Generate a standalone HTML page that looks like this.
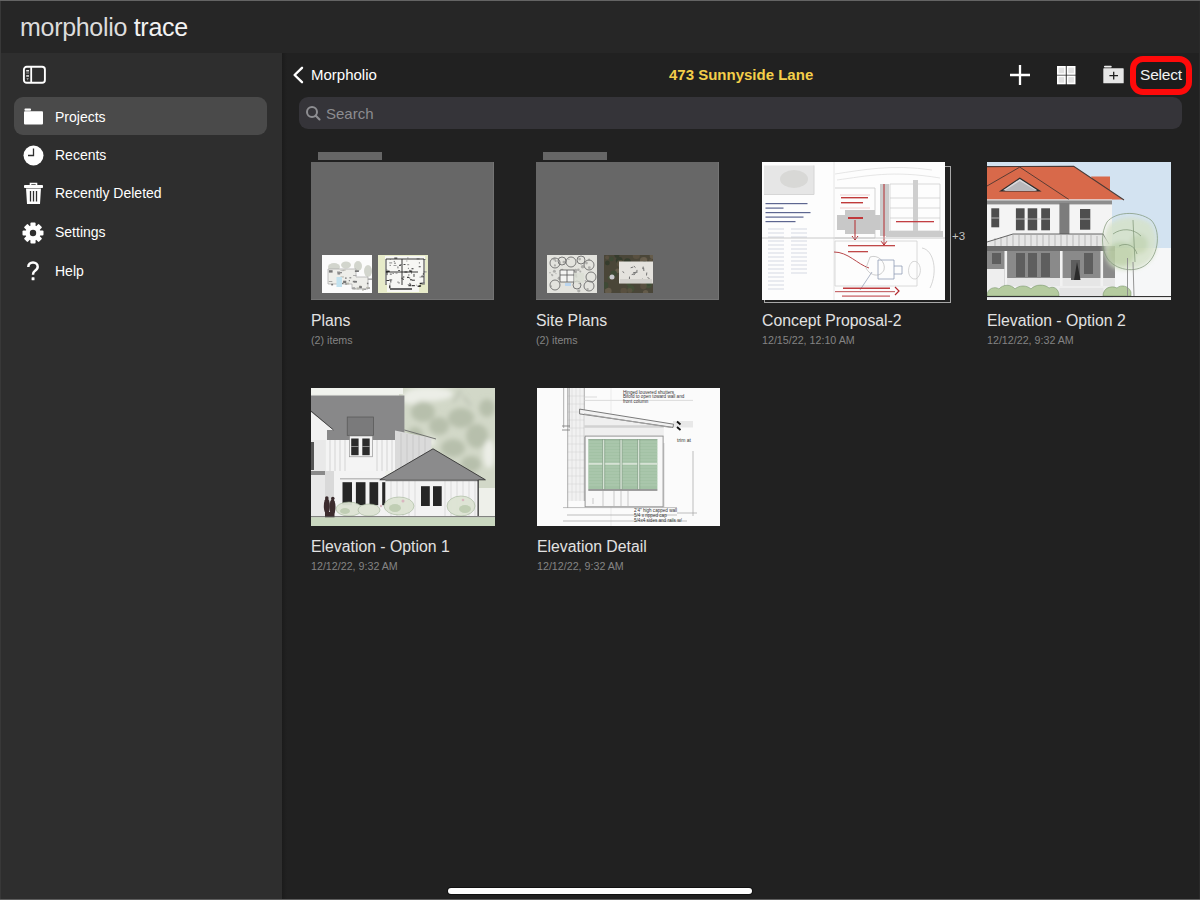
<!DOCTYPE html>
<html><head><meta charset="utf-8">
<style>
*{margin:0;padding:0;box-sizing:border-box}
html,body{width:1200px;height:900px;overflow:hidden;background:#212121;font-family:"Liberation Sans",sans-serif;color:#fff}
.abs{position:absolute}
#top{left:0;top:0;width:1200px;height:53px;background:#262626;border-top:1px solid #646464}
#brand{left:20px;top:12.5px;font-size:25px;color:#f2f2f2;white-space:nowrap;letter-spacing:-0.3px}#brand span{color:#dcdcdc}
#side{left:0;top:53px;width:282px;height:847px;background:#2e2e2e}
#main{left:282px;top:53px;width:918px;height:847px;background:linear-gradient(to right,#1b1b1b,#212121 5px)}
.sel{left:14px;top:97px;width:253px;height:38px;background:#4a4a4a;border-radius:9px}
.si{left:55px;font-size:14px;color:#fff;white-space:nowrap}
.t{white-space:nowrap}
#search{left:299px;top:97px;width:883px;height:32px;background:#353439;border-radius:9px}
.folder{background:#676767;box-shadow:inset -1px -1px 0 #747474}
.ftab{background:#666}
.name{font-size:15.8px;color:#e2e2e2;white-space:nowrap}
.sub{font-size:10.7px;color:#848484;white-space:nowrap}
#home{left:448px;top:887.5px;width:304px;height:6px;border-radius:3px;background:#fff;box-shadow:0 0 0 1px #111}
</style></head><body>
<div id="top" class="abs"></div>
<div id="brand" class="abs"><span>morpholio</span> trace</div>
<div id="side" class="abs"></div>
<div id="main" class="abs"></div>

<!-- sidebar toggle icon -->
<svg class="abs" style="left:22px;top:65px" width="26" height="20" viewBox="0 0 26 20">
  <rect x="1.9" y="1.8" width="21" height="16" rx="2.8" fill="none" stroke="#fff" stroke-width="1.9"/>
  <line x1="9.2" y1="2" x2="9.2" y2="18" stroke="#fff" stroke-width="1.8"/>
  <rect x="4.2" y="5" width="2.8" height="1.5" fill="#e6e6e6"/>
  <rect x="4.2" y="7.6" width="2.8" height="0.8" fill="#bbb"/>
  <rect x="4.2" y="10.2" width="2.8" height="1.5" fill="#e6e6e6"/>
  <path d="M4.4 13 H6.8 L5.6 15.5 Z" fill="#999"/>
</svg>

<div class="abs sel"></div>
<!-- folder icon -->
<svg class="abs" style="left:23px;top:107px" width="21" height="19" viewBox="0 0 21 19">
  <rect x="1.5" y="1.5" width="6.5" height="2.2" rx="0.8" fill="#fff"/>
  <rect x="1" y="4.3" width="19" height="13.2" rx="1" fill="#fff"/>
</svg>
<div class="abs si" style="top:109px">Projects</div>

<!-- clock -->
<svg class="abs" style="left:23px;top:145px" width="21" height="21" viewBox="0 0 21 21">
  <circle cx="10.5" cy="10.5" r="10" fill="#fff"/>
  <path d="M10.5 3.5 V10.5 H5" fill="none" stroke="#2e2e2e" stroke-width="1.3"/>
</svg>
<div class="abs si" style="top:147px">Recents</div>

<!-- trash -->
<svg class="abs" style="left:23px;top:182px" width="21" height="23" viewBox="0 0 21 23">
  <path d="M7.5 3 V1.5 H13.5 V3" fill="none" stroke="#fff" stroke-width="1.6"/>
  <rect x="1" y="3" width="19" height="3" rx="0.8" fill="#fff"/>
  <path d="M3 6.5 H18 L17 22 H4 Z" fill="#fff"/>
  <path d="M7.5 9 V19.5 M10.5 9 V19.5 M13.5 9 V19.5" stroke="#2e2e2e" stroke-width="1.3"/>
</svg>
<div class="abs si" style="top:185px">Recently Deleted</div>

<!-- gear -->
<svg class="abs" style="left:22px;top:222px" width="22" height="22" viewBox="0 0 22 22">
  <g fill="#fff" transform="translate(11 11)">
    <circle r="7.5"/>
    <rect x="-2.6" y="-10.5" width="5.2" height="21" rx="1"/>
    <rect x="-2.6" y="-10.5" width="5.2" height="21" rx="1" transform="rotate(45)"/>
    <rect x="-2.6" y="-10.5" width="5.2" height="21" rx="1" transform="rotate(90)"/>
    <rect x="-2.6" y="-10.5" width="5.2" height="21" rx="1" transform="rotate(135)"/>
  </g>
  <circle cx="11" cy="11" r="3.2" fill="#2e2e2e"/>
</svg>
<div class="abs si" style="top:224px">Settings</div>

<!-- help -->
<svg class="abs" style="left:26px;top:261px" width="14" height="20" viewBox="0 0 14 20"><path d="M2.3 6 C2.3 3.2 4.3 1.5 7 1.5 C9.7 1.5 11.7 3.3 11.7 5.8 C11.7 8 10.3 9 8.8 10 C7.5 10.9 7 11.6 7 13.8" fill="none" stroke="#fff" stroke-width="2.5"/><rect x="5.6" y="16.2" width="2.9" height="3" rx="0.5" fill="#fff"/></svg>
<div class="abs si" style="top:262.5px">Help</div>

<!-- main header -->
<svg class="abs" style="left:291px;top:64px" width="14" height="21" viewBox="0 0 14 21">
  <path d="M11 3.8 L3.6 11 L11 18.2" fill="none" stroke="#fff" stroke-width="2.4" stroke-linecap="round" stroke-linejoin="round"/>
</svg>
<div class="abs t" style="left:311px;top:65.5px;font-size:15px;color:#fff">Morpholio</div>
<div class="abs t" style="left:669px;top:66px;font-size:15px;font-weight:bold;color:#f4cf4a">473 Sunnyside Lane</div>

<svg class="abs" style="left:1009px;top:64px" width="22" height="22" viewBox="0 0 22 22">
  <path d="M11 1 V21 M1 11 H21" stroke="#fff" stroke-width="2.3"/>
</svg>
<svg class="abs" style="left:1056px;top:65px" width="21" height="21" viewBox="0 0 21 21">
  <g fill="#e2e2e2" stroke="#fff" stroke-width="1.6">
  <rect x="1.8" y="1.8" width="7.2" height="7.2"/>
  <rect x="11.5" y="1.8" width="7.2" height="7.2"/>
  <rect x="1.8" y="11.3" width="7.2" height="7.2"/>
  <rect x="11.5" y="11.3" width="7.2" height="7.2"/>
  </g>
</svg>
<svg class="abs" style="left:1102px;top:64px" width="24" height="21" viewBox="0 0 24 21">
  <rect x="2" y="1.7" width="7.7" height="1.8" rx="0.8" fill="#eee"/>
  <rect x="1.3" y="4.3" width="20.4" height="15" rx="0.6" fill="#e6e6e6"/>
  <path d="M11.7 7.8 V15.6 M7.4 11.7 H16" stroke="#1e1e1e" stroke-width="1.3"/>
</svg>
<div class="abs" style="left:1130px;top:56px;width:62px;height:39px;border:6.3px solid #ff0a0a;border-radius:13px;background:#1c1c1c"></div>
<div class="abs t" style="left:1140px;top:65.5px;font-size:15.5px;color:#f2f2f2;letter-spacing:-0.2px">Select</div>

<div id="search" class="abs"></div>
<svg class="abs" style="left:305px;top:105px" width="17" height="17" viewBox="0 0 17 17">
  <circle cx="7" cy="7" r="5" fill="none" stroke="#8e8e92" stroke-width="2"/>
  <path d="M10.6 10.6 L14.5 14.5" stroke="#8e8e92" stroke-width="2.1" stroke-linecap="round"/>
</svg>
<div class="abs t" style="left:326px;top:104.7px;font-size:15px;color:#8c8c90">Search</div>

<!-- items row 1 -->
<div class="abs ftab" style="left:318px;top:152px;width:64px;height:8px"></div>
<div class="abs folder" style="left:311px;top:162px;width:183px;height:138px"></div>
<svg class="abs" style="left:322px;top:255px" width="50" height="38" viewBox="0 0 50 38">
<rect width="50" height="38" fill="#fbfbfb"/>
<g fill="#c9ccc2" opacity="0.8"><ellipse cx="12" cy="12" rx="6" ry="4"/><ellipse cx="24" cy="10" rx="5" ry="3.5"/><ellipse cx="36" cy="11" rx="4" ry="5"/><ellipse cx="46" cy="16" rx="4" ry="6"/></g>
<path d="M6 14 H34 V22 H46 V34 H30 V29 H6 Z" fill="#eeeeea" stroke="#a8a8a8" stroke-width="0.7"/>
<rect x="15.5" y="24.9" width="2.5" height="1.7" fill="#8a8a8a"/><rect x="30.2" y="32.2" width="2.9" height="1.6" fill="#a5a5a5"/><rect x="45.8" y="23.4" width="4.3" height="1.5" fill="#a5a5a5"/><rect x="15.3" y="17.0" width="4.7" height="1.3" fill="#8a8a8a"/><rect x="32.9" y="15.3" width="4.0" height="1.7" fill="#777"/><rect x="37.2" y="30.5" width="2.1" height="1.7" fill="#b9b9b0"/><rect x="34.6" y="32.4" width="2.6" height="2.1" fill="#b9b9b0"/><rect x="20.6" y="14.7" width="3.0" height="1.0" fill="#b9b9b0"/><rect x="37.2" y="31.1" width="2.7" height="2.2" fill="#777"/><rect x="27.4" y="22.2" width="1.9" height="1.2" fill="#8a8a8a"/><rect x="40.3" y="33.8" width="3.7" height="0.8" fill="#777"/><rect x="44.6" y="32.1" width="3.3" height="1.9" fill="#a5a5a5"/><rect x="31.3" y="33.8" width="2.1" height="0.7" fill="#b9b9b0"/><rect x="40.2" y="33.8" width="1.4" height="2.1" fill="#b9b9b0"/><rect x="23.1" y="22.3" width="1.5" height="1.7" fill="#8a8a8a"/><rect x="21.1" y="25.7" width="3.2" height="2.3" fill="#777"/><rect x="18.4" y="15.5" width="3.4" height="0.6" fill="#a5a5a5"/><rect x="16.5" y="27.8" width="4.9" height="1.2" fill="#777"/><rect x="44.3" y="31.9" width="2.5" height="1.4" fill="#b9b9b0"/><rect x="31.8" y="25.9" width="3.2" height="1.7" fill="#777"/><rect x="23.2" y="28.4" width="2.0" height="1.1" fill="#777"/><rect x="26.8" y="25.0" width="1.0" height="1.3" fill="#777"/><rect x="6.8" y="26.3" width="3.5" height="0.6" fill="#777"/><rect x="24.7" y="27.6" width="2.4" height="1.9" fill="#b9b9b0"/><rect x="6.9" y="15.2" width="3.7" height="2.4" fill="#777"/><rect x="31.1" y="20.0" width="3.4" height="0.9" fill="#a5a5a5"/><rect x="18.5" y="21.4" width="3.4" height="1.1" fill="#b9b9b0"/><rect x="44.9" y="27.7" width="1.5" height="1.5" fill="#777"/><rect x="15.5" y="17.7" width="2.7" height="1.9" fill="#8a8a8a"/><rect x="30.0" y="33.0" width="3.7" height="0.9" fill="#a5a5a5"/><rect x="9.2" y="28.8" width="1.9" height="1.6" fill="#777"/><rect x="15.0" y="16.4" width="3.1" height="0.9" fill="#a5a5a5"/><rect x="30.8" y="25.8" width="2.7" height="1.5" fill="#777"/>
<rect x="14.5" y="22" width="5.5" height="10" fill="#c2e2ef"/>
</svg>
<svg class="abs" style="left:378px;top:255px" width="50" height="38" viewBox="0 0 50 38">
<rect width="50" height="38" fill="#e7ebc9"/>
<path d="M7 1 H47 V29 H41 V37 H9 V29 H7 Z" fill="#f7f7f4"/>
<rect x="25.1" y="21.0" width="1.2" height="2.0" fill="#888"/><rect x="8.4" y="14.4" width="1.0" height="0.8" fill="#888"/><rect x="43.8" y="28.4" width="3.0" height="1.0" fill="#333"/><rect x="8.3" y="15.7" width="3.0" height="1.2" fill="#555"/><rect x="41.7" y="27.8" width="3.0" height="1.2" fill="#1a1a1a"/><rect x="38.6" y="3.4" width="3.0" height="1.0" fill="#888"/><rect x="29.5" y="2.4" width="0.8" height="1.0" fill="#555"/><rect x="16.3" y="2.6" width="3.0" height="1.0" fill="#1a1a1a"/><rect x="43.6" y="20.4" width="1.2" height="1.0" fill="#555"/><rect x="44.9" y="18.2" width="0.8" height="1.2" fill="#333"/><rect x="14.7" y="18.0" width="0.8" height="1.0" fill="#333"/><rect x="37.9" y="29.7" width="1.0" height="0.8" fill="#888"/><rect x="31.5" y="27.9" width="0.8" height="1.2" fill="#333"/><rect x="17.5" y="17.8" width="2.0" height="0.8" fill="#888"/><rect x="19.6" y="26.6" width="0.8" height="1.0" fill="#1a1a1a"/><rect x="11.9" y="4.1" width="0.8" height="0.8" fill="#888"/><rect x="19.3" y="11.4" width="1.2" height="2.0" fill="#888"/><rect x="29.9" y="12.8" width="1.0" height="1.2" fill="#888"/><rect x="11.8" y="18.7" width="2.0" height="0.8" fill="#333"/><rect x="8.7" y="15.8" width="3.0" height="1.0" fill="#1a1a1a"/><rect x="31.3" y="14.9" width="1.2" height="2.0" fill="#555"/><rect x="23.4" y="22.8" width="2.0" height="0.8" fill="#333"/><rect x="15.5" y="10.1" width="3.0" height="0.8" fill="#888"/><rect x="15.8" y="5.9" width="0.8" height="1.2" fill="#555"/><rect x="44.8" y="18.8" width="1.2" height="0.8" fill="#888"/><rect x="33.9" y="30.2" width="3.0" height="1.0" fill="#1a1a1a"/><rect x="35.6" y="18.9" width="0.8" height="3.0" fill="#1a1a1a"/><rect x="25.5" y="9.1" width="2.0" height="0.8" fill="#1a1a1a"/><rect x="29.0" y="21.8" width="2.0" height="1.0" fill="#1a1a1a"/><rect x="20.3" y="27.6" width="0.8" height="0.8" fill="#888"/><rect x="39.6" y="30.6" width="3.0" height="1.2" fill="#1a1a1a"/><rect x="8.4" y="25.0" width="3.0" height="1.0" fill="#333"/><rect x="11.2" y="24.5" width="3.0" height="0.8" fill="#555"/><rect x="40.9" y="7.4" width="0.8" height="1.0" fill="#333"/><rect x="32.2" y="15.6" width="2.0" height="1.2" fill="#555"/><rect x="30.4" y="30.2" width="3.0" height="1.0" fill="#1a1a1a"/><rect x="21.6" y="9.1" width="2.0" height="1.0" fill="#888"/><rect x="33.9" y="24.7" width="3.0" height="1.0" fill="#333"/><rect x="32.1" y="28.9" width="1.0" height="1.0" fill="#1a1a1a"/><rect x="26.4" y="16.5" width="3.0" height="1.0" fill="#333"/><rect x="12.3" y="24.6" width="1.0" height="3.0" fill="#555"/><rect x="43.5" y="27.5" width="3.0" height="1.2" fill="#888"/><rect x="30.2" y="19.5" width="1.2" height="1.0" fill="#555"/><rect x="7.9" y="16.4" width="2.0" height="1.0" fill="#333"/><rect x="29.2" y="9.2" width="2.0" height="1.0" fill="#888"/><rect x="45.7" y="16.4" width="3.0" height="1.0" fill="#888"/><rect x="29.6" y="29.1" width="3.0" height="0.8" fill="#888"/><rect x="45.7" y="4.2" width="2.0" height="0.8" fill="#888"/><rect x="42.5" y="28.7" width="0.8" height="1.0" fill="#555"/><rect x="16.4" y="7.7" width="1.2" height="1.0" fill="#333"/><rect x="31.3" y="22.3" width="0.8" height="1.2" fill="#333"/><rect x="40.7" y="11.4" width="2.0" height="0.8" fill="#1a1a1a"/><rect x="11.6" y="9.9" width="1.2" height="0.8" fill="#555"/><rect x="24.6" y="24.0" width="1.2" height="0.8" fill="#1a1a1a"/><rect x="20.1" y="15.1" width="2.0" height="0.8" fill="#333"/><rect x="32.1" y="24.3" width="2.0" height="1.0" fill="#333"/><rect x="28.2" y="5.6" width="1.2" height="0.8" fill="#888"/><rect x="11.4" y="28.6" width="1.2" height="0.8" fill="#555"/><rect x="33.5" y="13.1" width="2.0" height="1.2" fill="#555"/><rect x="11.2" y="30.3" width="1.2" height="3.0" fill="#1a1a1a"/><rect x="33.0" y="17.3" width="0.8" height="1.2" fill="#333"/><rect x="32.2" y="23.9" width="1.0" height="1.0" fill="#555"/><rect x="41.7" y="21.7" width="0.8" height="0.8" fill="#333"/><rect x="42.9" y="21.3" width="3.0" height="1.0" fill="#555"/><rect x="32.3" y="15.7" width="1.2" height="1.0" fill="#1a1a1a"/><rect x="11.2" y="7.4" width="3.0" height="1.0" fill="#888"/><rect x="21.0" y="10.0" width="2.0" height="0.8" fill="#333"/><rect x="8.6" y="17.1" width="1.0" height="3.0" fill="#555"/><rect x="41.1" y="30.4" width="2.0" height="1.0" fill="#1a1a1a"/><rect x="20.8" y="27.4" width="0.8" height="1.0" fill="#555"/>
<path d="M8 4 H46 V28 M8 4 V30 M8 17 H40 M24 4 V30" fill="none" stroke="#222" stroke-width="0.9"/>
<path d="M12 34 H34" stroke="#666" stroke-width="2"/>
</svg>
<div class="abs name" style="left:311px;top:312px">Plans</div>
<div class="abs sub" style="left:311px;top:334px">(2) items</div>

<div class="abs ftab" style="left:543px;top:152px;width:64px;height:8px"></div>
<div class="abs folder" style="left:536px;top:162px;width:183px;height:138px"></div>
<svg class="abs" style="left:547px;top:255px" width="50" height="38" viewBox="0 0 50 38">
<rect width="50" height="38" fill="#e3e3de"/>
<circle cx="8" cy="8" r="5" fill="none" stroke="#6d6d6d" stroke-width="0.9"/><circle cx="15" cy="6" r="4" fill="none" stroke="#6d6d6d" stroke-width="0.9"/><circle cx="24" cy="7" r="5" fill="none" stroke="#6d6d6d" stroke-width="0.9"/><circle cx="34" cy="5" r="4" fill="none" stroke="#6d6d6d" stroke-width="0.9"/><circle cx="42" cy="10" r="5" fill="none" stroke="#6d6d6d" stroke-width="0.9"/><circle cx="44" cy="22" r="5" fill="none" stroke="#6d6d6d" stroke-width="0.9"/><circle cx="42" cy="31" r="5" fill="none" stroke="#6d6d6d" stroke-width="0.9"/><circle cx="8" cy="30" r="5" fill="none" stroke="#6d6d6d" stroke-width="0.9"/><circle cx="30" cy="30" r="4" fill="none" stroke="#6d6d6d" stroke-width="0.9"/><circle cx="16.9" cy="7.1" r="1.4" fill="#8a8a88" opacity="0.6"/><circle cx="5.3" cy="20.2" r="1.0" fill="#8a8a88" opacity="0.6"/><circle cx="4.7" cy="19.3" r="0.6" fill="#8a8a88" opacity="0.6"/><circle cx="21.9" cy="4.4" r="0.7" fill="#8a8a88" opacity="0.6"/><circle cx="21.5" cy="30.1" r="0.7" fill="#8a8a88" opacity="0.6"/><circle cx="12.3" cy="23.3" r="1.7" fill="#8a8a88" opacity="0.6"/><circle cx="28.5" cy="15.5" r="1.8" fill="#8a8a88" opacity="0.6"/><circle cx="4.1" cy="31.2" r="0.9" fill="#8a8a88" opacity="0.6"/><circle cx="8.6" cy="6.0" r="1.0" fill="#8a8a88" opacity="0.6"/><circle cx="39.5" cy="8.1" r="1.3" fill="#8a8a88" opacity="0.6"/><circle cx="31.4" cy="14.7" r="1.3" fill="#8a8a88" opacity="0.6"/><circle cx="4.9" cy="4.0" r="0.8" fill="#8a8a88" opacity="0.6"/><circle cx="33.3" cy="16.5" r="1.0" fill="#8a8a88" opacity="0.6"/><circle cx="28.9" cy="17.4" r="1.0" fill="#8a8a88" opacity="0.6"/><circle cx="38.5" cy="25.8" r="0.9" fill="#8a8a88" opacity="0.6"/><circle cx="28.4" cy="19.9" r="1.7" fill="#8a8a88" opacity="0.6"/><circle cx="35.6" cy="11.8" r="1.8" fill="#8a8a88" opacity="0.6"/><circle cx="7.4" cy="16.2" r="1.5" fill="#8a8a88" opacity="0.6"/><circle cx="9.0" cy="18.6" r="0.6" fill="#8a8a88" opacity="0.6"/><circle cx="32.7" cy="28.0" r="1.3" fill="#8a8a88" opacity="0.6"/><circle cx="42.3" cy="12.7" r="1.4" fill="#8a8a88" opacity="0.6"/><circle cx="29.3" cy="21.7" r="1.1" fill="#8a8a88" opacity="0.6"/><circle cx="40.6" cy="34.1" r="1.2" fill="#8a8a88" opacity="0.6"/><circle cx="32.6" cy="4.1" r="1.4" fill="#8a8a88" opacity="0.6"/><circle cx="31.8" cy="35.8" r="1.6" fill="#8a8a88" opacity="0.6"/><circle cx="15.1" cy="15.1" r="1.4" fill="#8a8a88" opacity="0.6"/><circle cx="3.0" cy="17.7" r="0.8" fill="#8a8a88" opacity="0.6"/><circle cx="7.4" cy="4.0" r="1.5" fill="#8a8a88" opacity="0.6"/><circle cx="7.9" cy="10.4" r="1.1" fill="#8a8a88" opacity="0.6"/><circle cx="42.1" cy="4.7" r="1.1" fill="#8a8a88" opacity="0.6"/>
<path d="M13 15 H27 V27 H13 Z" fill="#f4f4f2"/><path d="M13 15 H27 V27 H13 Z M13 20 H27 M20 15 V27" fill="none" stroke="#555" stroke-width="0.8"/>
<rect x="18" y="28" width="6" height="3" fill="#b9d4ee"/>
<rect x="27" y="18" width="10" height="10" fill="#d9ddd3" opacity="0.8"/>
</svg>
<svg class="abs" style="left:604px;top:255px" width="49" height="38" viewBox="0 0 49 38">
<rect width="49" height="38" fill="#4a4638"/>
<circle cx="26.9" cy="33.6" r="3.5" fill="#445238" opacity="0.8"/><circle cx="13.6" cy="15.8" r="2.4" fill="#6b6250" opacity="0.8"/><circle cx="46.9" cy="5.7" r="1.9" fill="#5c5342" opacity="0.8"/><circle cx="32.3" cy="0.5" r="3.6" fill="#5c5342" opacity="0.8"/><circle cx="12.9" cy="0.2" r="2.5" fill="#2f3a2a" opacity="0.8"/><circle cx="29.9" cy="12.1" r="1.8" fill="#445238" opacity="0.8"/><circle cx="46.6" cy="24.9" r="3.3" fill="#6b6250" opacity="0.8"/><circle cx="44.1" cy="29.6" r="3.7" fill="#445238" opacity="0.8"/><circle cx="19.2" cy="15.2" r="1.8" fill="#6b6250" opacity="0.8"/><circle cx="3.1" cy="2.6" r="2.0" fill="#5c5342" opacity="0.8"/><circle cx="5.4" cy="22.8" r="1.8" fill="#445238" opacity="0.8"/><circle cx="7.4" cy="3.9" r="2.4" fill="#3b4a34" opacity="0.8"/><circle cx="3.4" cy="7.9" r="2.4" fill="#2f3a2a" opacity="0.8"/><circle cx="46.8" cy="22.9" r="2.7" fill="#3b4a34" opacity="0.8"/><circle cx="41.6" cy="37.7" r="2.7" fill="#6b6250" opacity="0.8"/><circle cx="15.3" cy="5.5" r="3.4" fill="#2f3a2a" opacity="0.8"/><circle cx="23.5" cy="26.3" r="2.8" fill="#5c5342" opacity="0.8"/><circle cx="46.6" cy="20.1" r="1.9" fill="#445238" opacity="0.8"/><circle cx="44.8" cy="28.8" r="2.2" fill="#3b4a34" opacity="0.8"/><circle cx="34.1" cy="9.9" r="2.4" fill="#5c5342" opacity="0.8"/><circle cx="17.4" cy="8.5" r="2.9" fill="#445238" opacity="0.8"/><circle cx="16.2" cy="8.5" r="3.5" fill="#5c5342" opacity="0.8"/><circle cx="39.5" cy="31.1" r="3.3" fill="#5c5342" opacity="0.8"/><circle cx="9.8" cy="18.7" r="3.3" fill="#3b4a34" opacity="0.8"/><circle cx="38.7" cy="17.9" r="2.0" fill="#445238" opacity="0.8"/><circle cx="46.9" cy="17.0" r="3.8" fill="#2f3a2a" opacity="0.8"/><circle cx="46.8" cy="13.9" r="2.1" fill="#5c5342" opacity="0.8"/><circle cx="23.0" cy="12.8" r="2.7" fill="#445238" opacity="0.8"/><circle cx="41.2" cy="18.2" r="3.1" fill="#3b4a34" opacity="0.8"/><circle cx="40.9" cy="4.6" r="2.5" fill="#5c5342" opacity="0.8"/><circle cx="23.4" cy="6.8" r="3.5" fill="#2f3a2a" opacity="0.8"/><circle cx="4.3" cy="36.0" r="3.3" fill="#6b6250" opacity="0.8"/><circle cx="19.7" cy="36.0" r="3.3" fill="#5c5342" opacity="0.8"/><circle cx="48.7" cy="1.0" r="3.0" fill="#6b6250" opacity="0.8"/><circle cx="39.5" cy="5.6" r="3.6" fill="#6b6250" opacity="0.8"/><circle cx="32.2" cy="13.3" r="2.9" fill="#5c5342" opacity="0.8"/><circle cx="1.0" cy="30.4" r="3.3" fill="#3b4a34" opacity="0.8"/><circle cx="25.8" cy="35.5" r="2.6" fill="#5c5342" opacity="0.8"/><circle cx="40.5" cy="8.0" r="2.1" fill="#2f3a2a" opacity="0.8"/><circle cx="24.6" cy="29.0" r="2.3" fill="#445238" opacity="0.8"/>
<circle cx="8" cy="22" r="2.5" fill="#c8c8cc"/>
<rect x="15" y="6.5" width="34" height="22" fill="#e4e2dd"/>
<path d="M29.3 12.0 l-2.6 0.8" stroke="#666" stroke-width="0.9"/><path d="M30.4 18.8 l-2.7 0.8" stroke="#666" stroke-width="0.9"/><path d="M42.8 17.5 l-0.3 3.0" stroke="#666" stroke-width="0.9"/><path d="M18.5 16.6 l1.7 1.1" stroke="#666" stroke-width="0.9"/><path d="M39.6 12.6 l0.3 3.4" stroke="#666" stroke-width="0.9"/><path d="M33.0 14.9 l-0.2 3.1" stroke="#666" stroke-width="0.9"/><path d="M39.2 11.6 l-0.5 2.5" stroke="#666" stroke-width="0.9"/><path d="M25.5 21.6 l-0.1 3.1" stroke="#666" stroke-width="0.9"/><path d="M38.5 23.7 l0.6 3.2" stroke="#666" stroke-width="0.9"/><path d="M31.6 17.7 l-1.7 2.4" stroke="#666" stroke-width="0.9"/><path d="M32.4 17.2 l-3.3 0.6" stroke="#666" stroke-width="0.9"/><path d="M41.7 24.1 l2.1 2.3" stroke="#666" stroke-width="0.9"/><path d="M43.5 22.6 l2.0 0.9" stroke="#666" stroke-width="0.9"/><path d="M29.9 11.1 l1.6 1.5" stroke="#666" stroke-width="0.9"/>
<rect x="16" y="24" width="32" height="4" fill="#d3d1cc"/>
</svg>
<div class="abs name" style="left:536px;top:312px">Site Plans</div>
<div class="abs sub" style="left:536px;top:334px">(2) items</div>

<div class="abs" style="left:764px;top:166px;width:187px;height:137px;border:1px solid #a8a8a8"></div>
<svg class="abs" style="left:762px;top:162px" width="183" height="138" viewBox="0 0 183 138">
<rect width="183" height="138" fill="#fdfdfd"/>
<rect x="2" y="3.5" width="50" height="29" fill="#e6e6e6"/>
<ellipse cx="32" cy="17" rx="14" ry="9" fill="#d8d8d6"/>
<path d="M52 3.5 V32.5 H2" stroke="#d6d6d6" stroke-width="1" fill="none"/>
<g fill="#5d6690">
<rect x="3.5" y="41" width="42" height="1.2"/><rect x="3.5" y="45.5" width="18" height="1.2"/><rect x="3.5" y="50" width="45" height="1.2"/><rect x="3.5" y="54.5" width="38" height="1.2"/><rect x="3.5" y="59" width="30" height="1.2"/>
</g>
<g fill="#e9ebf0">
<rect x="6" y="66" width="16" height="62"/><rect x="29" y="66" width="16" height="46"/>
</g>
<g stroke="#fdfdfd" stroke-width="1.8"><path d="M6 69 H45 M6 73 H45 M6 77 H45 M6 81 H45 M6 85 H45 M6 89 H45 M6 93 H45 M6 97 H45 M6 101 H45 M6 105 H45 M6 109 H45 M6 113 H29 M6 117 H29 M6 121 H29 M6 125 H29"/></g>
<g fill="none" stroke="#e0e0e0" stroke-width="0.8">
<path d="M73 12 C100 8 130 2 170 8 M75 18 C105 14 130 8 178 16 M72 0 V138"/>
</g>
<path d="M73 26 H113 V76 H73" fill="none" stroke="#c8c8c8" stroke-width="0.8"/>
<g fill="#c03a3a"><rect x="79" y="35" width="27" height="1.4"/><rect x="79" y="40" width="22" height="1.4"/></g>
<path d="M78 33 H108 M78 46 H108" stroke="#e4b4b4" stroke-width="0.6"/>
<path d="M75 53 H83 V48 H113 V53 H120 V68 H113 V72 H83 V68 H75 Z" fill="#c8c8c8"/>
<rect x="86" y="55" width="15" height="2" fill="#c0393c"/>
<path d="M93 58 V77 M90 74 L93 78 L96 74" fill="none" stroke="#b32a2f" stroke-width="1"/>
<rect x="118" y="22" width="9" height="52" fill="#cbcbcb"/>
<path d="M122 22 V83 M119 79 L122 83 L125 79" fill="none" stroke="#b32a2f" stroke-width="1"/>
<path d="M128 22 H178 V69 H128 Z M128 36 H178 M128 46 H178 M128 56 H178" fill="none" stroke="#c9c9c9" stroke-width="0.7"/>
<rect x="151" y="18" width="5" height="52" fill="#cfcfcf"/>
<rect x="124" y="69" width="57" height="6" fill="#cbcbcb"/>
<rect x="134" y="59" width="38" height="1.3" fill="#c23e42"/>
<path d="M0 76 H183" stroke="#bdbdbd" stroke-width="0.8"/>
<path d="M73 79 H155 V124 H73 Z" fill="none" stroke="#d0d0d0" stroke-width="0.8"/>
<g fill="#c04848"><rect x="86" y="83" width="47" height="1.3"/><rect x="86" y="89" width="20" height="1.3"/></g>
<path d="M72 90 C86 90 95 102 107 106" fill="none" stroke="#b8474a" stroke-width="1"/>
<path d="M108 95 C116 92 124 100 122 108 C118 116 108 114 104 106 Z" fill="none" stroke="#c2c2c2" stroke-width="0.8"/>
<path d="M116 98 H132 V117 H116 Z M132 104 H140 V112 H132" fill="none" stroke="#8f9cb5" stroke-width="0.8"/>
<path d="M150 100 C158 96 162 112 154 117 C146 118 144 106 150 100 Z M160 86 C172 88 176 110 168 126" fill="none" stroke="#cccccc" stroke-width="0.8"/>
<path d="M110 110 L98 128" stroke="#8e98b0" stroke-width="0.7"/>
<rect x="81" y="125.5" width="47" height="1.5" fill="#bf3b3f"/>
<rect x="73" y="129" width="60" height="1.2" fill="#c76a6d"/>
<path d="M133 125 L137 129 L133 133" fill="none" stroke="#b32a2f" stroke-width="1.2"/>
<rect x="80" y="133.5" width="48" height="1.2" fill="#c5585c"/>
</svg>
<div class="abs t" style="left:952px;top:229.5px;font-size:11.5px;color:#c4c4c4">+3</div>
<div class="abs name" style="left:762px;top:312px">Concept Proposal-2</div>
<div class="abs sub" style="left:762px;top:334px">12/15/22, 12:10 AM</div>

<svg class="abs" style="left:987px;top:162px" width="184" height="138" viewBox="0 0 184 138">
<rect width="184" height="138" fill="#d3e3f1"/>
<rect x="126" y="86" width="58" height="50" fill="#f6f7f8"/>
<path d="M0 5 L86.7 4.3 L135.7 37.6 L0 37.6 Z" fill="#d8694a"/>
<path d="M104 14.6 L123 14.6 L123 28 L110 28 Z" fill="#d8694a"/>
<path d="M0 4.6 L86.7 4.3 L137 38" fill="none" stroke="#4a3a36" stroke-width="1.1"/>
<path d="M0 24 L32.8 5.1 L82 37.6" fill="none" stroke="#5a3c34" stroke-width="1"/>
<path d="M13.8 28.9 L32.8 16.2 L52.6 28.9 Z" fill="#d9d9dc" stroke="#2d2d2d" stroke-width="1.2"/>
<path d="M17 29 L32.8 19 L50 29 Z" fill="#b8b8bc"/>
<rect x="0" y="37.6" width="125" height="50" fill="#f4f4f4"/>
<rect x="0" y="38.4" width="125" height="4" fill="#8d8d8d"/>
<rect x="72.4" y="41" width="10" height="33" fill="#7c7c7c"/>
<g fill="#4e4e4e">
<rect x="4.3" y="46.3" width="7.9" height="19"/>
<rect x="28.9" y="46.3" width="8.7" height="22"/>
<rect x="40.7" y="46.3" width="9.5" height="22"/>
<rect x="54.2" y="46.3" width="8.8" height="22"/>
<rect x="93" y="47" width="10.3" height="20.7"/>
</g>
<g stroke="#cfcfcf" stroke-width="0.8"><path d="M4.3 56 H12.2 M28.9 57 H63 M93 57 H103.3"/></g>
<path d="M0 80 L26 72 L116 72 L122 82 L122 87 L0 87 Z" fill="#e6e6e6"/>
<g stroke="#9a9a9a" stroke-width="0.6"><path d="M8 76 V87 M14 75 V87 M20 74 V87 M26 73 V87 M32 73 V87 M38 73 V87 M44 73 V87 M50 73 V87 M56 73 V87 M62 73 V87 M68 73 V87 M74 73 V87 M80 73 V87 M86 73 V87 M92 73 V87 M98 73 V87 M104 73 V87 M110 74 V87"/></g>
<path d="M0 80 L26 72 L116 72 L122 82" fill="none" stroke="#555" stroke-width="0.9"/>
<rect x="0" y="84" width="128" height="42" fill="#8a8a8a"/>
<rect x="0" y="84" width="128" height="5" fill="#6c6c6c"/>
<rect x="20" y="116" width="108" height="10" fill="#e6e6e6"/>
<rect x="0" y="107" width="17.5" height="19" fill="#eeeeee"/>
<g fill="#5e5e5e">
<rect x="5" y="91" width="9" height="11"/>
<rect x="29" y="91" width="9" height="24"/>
<rect x="41" y="91" width="9" height="24"/>
<rect x="54" y="91" width="9" height="24"/>
<rect x="84" y="98" width="9" height="20"/>
<rect x="97" y="91" width="9" height="21"/>
</g>
<g fill="#f2f2f2"><rect x="17.5" y="89" width="2.6" height="37"/><rect x="73" y="89" width="2.6" height="37"/><rect x="113.5" y="89" width="2.6" height="37"/></g>
<path d="M90 100 L93.5 118 L87 118 Z" fill="#2a2a2a"/>
<rect x="0" y="124" width="126" height="10" fill="#eeeeee"/><rect x="72.4" y="126" width="44" height="8" fill="#e4e4e4"/>
<g fill="#b5cb9f" stroke="#6d8a60" stroke-width="0.5">
<path d="M0 134 C0 126 8 124 12 127 C16 122 24 122 28 127 C32 123 40 123 44 127 C48 122 58 122 62 126 C66 124 72 126 72 134 Z"/>
<path d="M116 134 C116 126 124 123 130 126 C134 122 142 124 144 130 V134 Z"/>
</g>
<defs><filter id="bl2" x="-20%" y="-20%" width="140%" height="140%"><feGaussianBlur stdDeviation="2"/></filter></defs>
<g filter="url(#bl2)" opacity="0.85">
<path d="M120 66 C126 54 148 52 162 60 C172 70 172 88 164 98 C154 108 136 112 124 104 C116 96 114 78 120 66 Z" fill="#d6e2ca"/>
<ellipse cx="134" cy="92" rx="14" ry="12" fill="#bcd0a6"/>
<ellipse cx="152" cy="82" rx="9" ry="10" fill="#c4d6b0"/>
</g>
<path d="M120 60 C128 50 150 48 164 58 C174 68 172 92 160 102 C148 112 128 108 120 96 C114 86 114 70 120 60 M126 72 C134 66 146 66 154 74 M132 84 C140 80 148 84 150 92 M146 58 L148 100" fill="none" stroke="#7d9474" stroke-width="0.7"/>
<path d="M140.5 96 L140.5 134 M146 100 L147 134" stroke="#8a8a8a" stroke-width="0.9"/>
<rect x="0" y="134" width="184" height="1.3" fill="#333"/>
<rect x="0" y="135.3" width="184" height="3" fill="#f2f2f2"/>
</svg>
<div class="abs name" style="left:987px;top:312px">Elevation - Option 2</div>
<div class="abs sub" style="left:987px;top:334px">12/12/22, 9:32 AM</div>

<!-- row 2 -->
<svg class="abs" style="left:311px;top:388px" width="184" height="138" viewBox="0 0 184 138">
<rect width="184" height="138" fill="#eef0ea"/>
<defs><filter id="bl1" x="-20%" y="-20%" width="140%" height="140%"><feGaussianBlur stdDeviation="2.5"/></filter><clipPath id="cp1"><rect width="184" height="138"/></clipPath></defs>
<rect x="88" y="0" width="96" height="100" fill="#d2d8c8"/>
<g clip-path="url(#cp1)"><g filter="url(#bl1)">
<g fill="#b3bba7" opacity="0.85">
<ellipse cx="112" cy="24" rx="12" ry="10"/><ellipse cx="128" cy="38" rx="10" ry="9"/><ellipse cx="150" cy="30" rx="13" ry="10"/><ellipse cx="166" cy="48" rx="11" ry="12"/><ellipse cx="142" cy="60" rx="12" ry="9"/><ellipse cx="104" cy="48" rx="8" ry="9"/><ellipse cx="176" cy="20" rx="8" ry="9"/><ellipse cx="160" cy="76" rx="10" ry="8"/>
</g>
<g fill="#eceee7">
<ellipse cx="118" cy="6" rx="24" ry="7"/><ellipse cx="100" cy="10" rx="10" ry="6"/><ellipse cx="178" cy="66" rx="6" ry="14"/><ellipse cx="128" cy="84" rx="10" ry="6"/><ellipse cx="120" cy="54" rx="5" ry="4"/>
</g>
<path d="M150 2 L142 14 M152 8 L160 18" stroke="#8e9488" stroke-width="1"/></g></g>
<rect x="0" y="0" width="92" height="6" fill="#f1f3ee"/>
<path d="M0 7.6 H93.4 V52 H14.8 V42 L0 26 Z" fill="#888889"/>
<path d="M0 24 L22.5 42 L16 42 L16 52 L0 52 Z" fill="#f2f2f2"/>
<path d="M0 23 L22.5 42" stroke="#444" stroke-width="1"/>
<rect x="14.8" y="52" width="72" height="31" fill="#f4f4f4"/>
<rect x="36.2" y="29" width="26.2" height="18.3" fill="#7a7a7b" stroke="#555" stroke-width="0.7"/>
<rect x="38.6" y="48" width="23" height="20.8" fill="#f4f4f4" stroke="#888" stroke-width="0.6"/>
<rect x="40.2" y="50.5" width="7.4" height="16.7" fill="#2b2b2b"/>
<rect x="51.3" y="50.5" width="7.4" height="16.7" fill="#2b2b2b"/>
<path d="M40.2 58.5 H47.6 M51.3 58.5 H58.7" stroke="#ccc" stroke-width="0.6"/>
<path d="M84 42.6 L120.4 50 L120.4 83 L84 83 Z" fill="#dadada"/>
<path d="M93.4 42 L125 51" stroke="#666" stroke-width="0.9"/>
<g stroke="#b5b5b5" stroke-width="0.5"><path d="M19 52 V83 M24 52 V83 M29 52 V83 M34 52 V83 M66 52 V83 M71 52 V83 M76 52 V83 M81 52 V83 M90 45 V83 M96 46 V83 M102 47 V83 M108 48 V83 M114 49 V83"/></g>
<rect x="0" y="52" width="14.8" height="76" fill="#e9e9e9"/>
<rect x="0" y="54" width="3" height="28" fill="#555"/>
<rect x="0" y="83" width="14" height="4" fill="#8a8a8a"/>
<rect x="14" y="83" width="60.3" height="45.3" fill="#f3f3f3"/>
<rect x="14" y="83" width="9" height="45.3" fill="#d9d9d9"/>
<rect x="29" y="90" width="42" height="1.5" fill="#bdbdbd"/>
<g fill="#262626">
<rect x="31.5" y="94.2" width="9.5" height="23"/><rect x="44.9" y="94.2" width="9.6" height="23"/><rect x="58.5" y="94.2" width="8.7" height="23"/><rect x="71.2" y="94.2" width="3.9" height="23"/>
</g>
<path d="M68.8 91.8 L122 60.8 L174.4 91.8 Z" fill="#8b8b8c" stroke="#333" stroke-width="0.9"/>
<rect x="74.3" y="91.8" width="93" height="36.5" fill="#f3f3f3"/>
<g stroke="#c2c2c2" stroke-width="0.5"><path d="M80 93 V128 M86 93 V128 M92 93 V128 M98 93 V128 M104 93 V128 M134 93 V128 M140 93 V128 M146 93 V128 M152 93 V128 M158 93 V128 M164 93 V128"/></g>
<rect x="74.3" y="91.8" width="93" height="1.4" fill="#777"/>
<rect x="110" y="98.2" width="8.8" height="19.8" fill="#262626"/>
<rect x="122" y="98.2" width="8.7" height="19.8" fill="#262626"/>
<rect x="166.5" y="92" width="1.3" height="36" fill="#333"/>
<g fill="#dde4d4" stroke="#9fb195" stroke-width="0.6" opacity="0.95">
<ellipse cx="38" cy="121" rx="13" ry="7"/><ellipse cx="58" cy="122" rx="11" ry="6"/><ellipse cx="88" cy="118" rx="15" ry="9"/><ellipse cx="150" cy="118" rx="14" ry="10"/>
</g>
<g fill="#b9c9ac" opacity="0.8"><ellipse cx="34" cy="123" rx="5" ry="3"/><ellipse cx="84" cy="120" rx="6" ry="4"/><ellipse cx="154" cy="121" rx="6" ry="4"/></g>
<g fill="#d9b7c0"><circle cx="92" cy="113" r="1.5"/><circle cx="70" cy="118" r="1.2"/><circle cx="152" cy="112" r="1.3"/></g>
<g fill="#3b2b2d"><ellipse cx="15.8" cy="118" rx="3" ry="8"/><circle cx="15.8" cy="110" r="1.8"/><ellipse cx="21.5" cy="119" rx="3" ry="8"/><circle cx="21.8" cy="110.5" r="1.8"/><rect x="14" y="124" width="9.5" height="7"/></g>
<rect x="0" y="128.3" width="184" height="1" fill="#555"/>
<rect x="0" y="129.3" width="184" height="8.7" fill="#c9d7bf"/>
</svg>
<div class="abs name" style="left:311px;top:538px">Elevation - Option 1</div>
<div class="abs sub" style="left:311px;top:560px">12/12/22, 9:32 AM</div>

<svg class="abs" style="left:537px;top:388px" width="183" height="138" viewBox="0 0 183 138">
<rect width="183" height="138" fill="#fbfbfb"/>
<rect x="30.7" y="0" width="16.6" height="113" fill="#f1f1f1"/>
<g stroke="#d2d2d2" stroke-width="0.5">
<path d="M30.7 8 H47.3 M30.7 16 H47.3 M30.7 24 H47.3 M30.7 32 H47.3 M30.7 40 H47.3 M30.7 48 H47.3 M30.7 56 H47.3 M30.7 64 H47.3 M30.7 72 H47.3 M30.7 80 H47.3 M30.7 88 H47.3 M30.7 96 H47.3 M30.7 104 H47.3 M35 0 V113 M39 0 V113 M43 0 V113"/>
</g>
<path d="M30.7 0 V120 M47.3 0 V113 M26.7 0 V40 M32.2 0 V40" stroke="#9a9a9a" stroke-width="0.8" fill="none"/>
<path d="M25 38 H33 M25 42 H33" stroke="#777" stroke-width="0.8"/>
<path d="M47.3 12.4 H156 M47.3 9 H60" stroke="#cfcfcf" stroke-width="0.7"/>
<path d="M74 0 V138" stroke="#e0e0e0" stroke-width="0.6"/>
<path d="M136 33 H156 V39.5 H136 Z" fill="#e8e8e8"/>
<path d="M47.3 25.5 L126.8 38 L126.8 49 L47.3 49 Z" fill="#efefef"/>
<path d="M47.3 38.5 H126.8" stroke="#d2d2d2" stroke-width="2.5"/>
<path d="M42.6 21.1 L136.5 36.2 L136 39.4 L42.6 25.9 Z" fill="#f2f2f2" stroke="#5a5a5a" stroke-width="0.8"/>
<path d="M47 26 L134 39.5" stroke="#a0a0a0" stroke-width="1.2"/>
<rect x="48.1" y="48.1" width="78" height="70.7" fill="#f8f8f8" stroke="#8c8c8c" stroke-width="0.9"/>
<rect x="51.3" y="51.3" width="69.1" height="50" fill="#a3c2a5"/>
<g stroke="#c3d6c3" stroke-width="0.45"><path d="M51.3 54 H120.4 M51.3 57 H120.4 M51.3 60 H120.4 M51.3 63 H120.4 M51.3 66 H120.4 M51.3 69 H120.4 M51.3 72 H120.4 M51.3 79 H120.4 M51.3 82 H120.4 M51.3 85 H120.4 M51.3 88 H120.4 M51.3 91 H120.4 M51.3 94 H120.4 M51.3 97 H120.4"/></g>
<g fill="#d5e2d4"><rect x="65.5" y="51.3" width="2.2" height="50"/><rect x="83" y="51.3" width="2.2" height="50"/><rect x="100.5" y="51.3" width="2.2" height="50"/><rect x="51.3" y="74.8" width="69.1" height="2"/></g>
<g stroke="#6d8b70" stroke-width="0.5"><path d="M65.5 51.3 V101.3 M67.7 51.3 V101.3 M83 51.3 V101.3 M85.2 51.3 V101.3 M100.5 51.3 V101.3 M102.7 51.3 V101.3 M51.3 51.6 H120.4"/></g>
<rect x="51.3" y="101.3" width="69.1" height="1.4" fill="#7a7a7a"/>
<g stroke="#a8a8a8" stroke-width="0.6"><path d="M66 103 V118 M77 103 V118 M84 103 V118 M91 103 V118 M56 110 V116"/></g>
<path d="M26 119.6 H140 M30 127 H140 M26 133 H150 M156 63 V128 M140 125 H160 M126.8 55 V119" stroke="#a4a4a4" stroke-width="0.7" fill="none"/>
<path d="M140 33.5 L143.5 36.5 M140 39 L143.5 42" stroke="#111" stroke-width="1.8"/>
<g font-family="Liberation Sans, sans-serif" font-size="4.6" fill="#333">
<text x="86" y="5.5">Hinged louvered shutters</text>
<text x="86" y="10.2">Bifold to open toward wall and</text>
<text x="86" y="14.8">front column</text>
<text x="140" y="53.5" font-size="5">trim at</text>
<text x="97" y="124">2'4" high capped wall</text>
<text x="97" y="129">5/4 x ripped cap</text>
<text x="97" y="134">5/4x4 sides and rails w/</text>
</g>
</svg>
<div class="abs name" style="left:537px;top:538px">Elevation Detail</div>
<div class="abs sub" style="left:537px;top:560px">12/12/22, 9:32 AM</div>

<div id="home" class="abs"></div>
<div class="abs" style="left:0;top:899px;width:1200px;height:1px;background:#5e5e5e"></div>
<div class="abs" style="left:0;top:1px;width:1px;height:898px;background:#383838"></div>
<div class="abs" style="left:1199px;top:1px;width:1px;height:898px;background:#2a2a2a"></div>
</body></html>
